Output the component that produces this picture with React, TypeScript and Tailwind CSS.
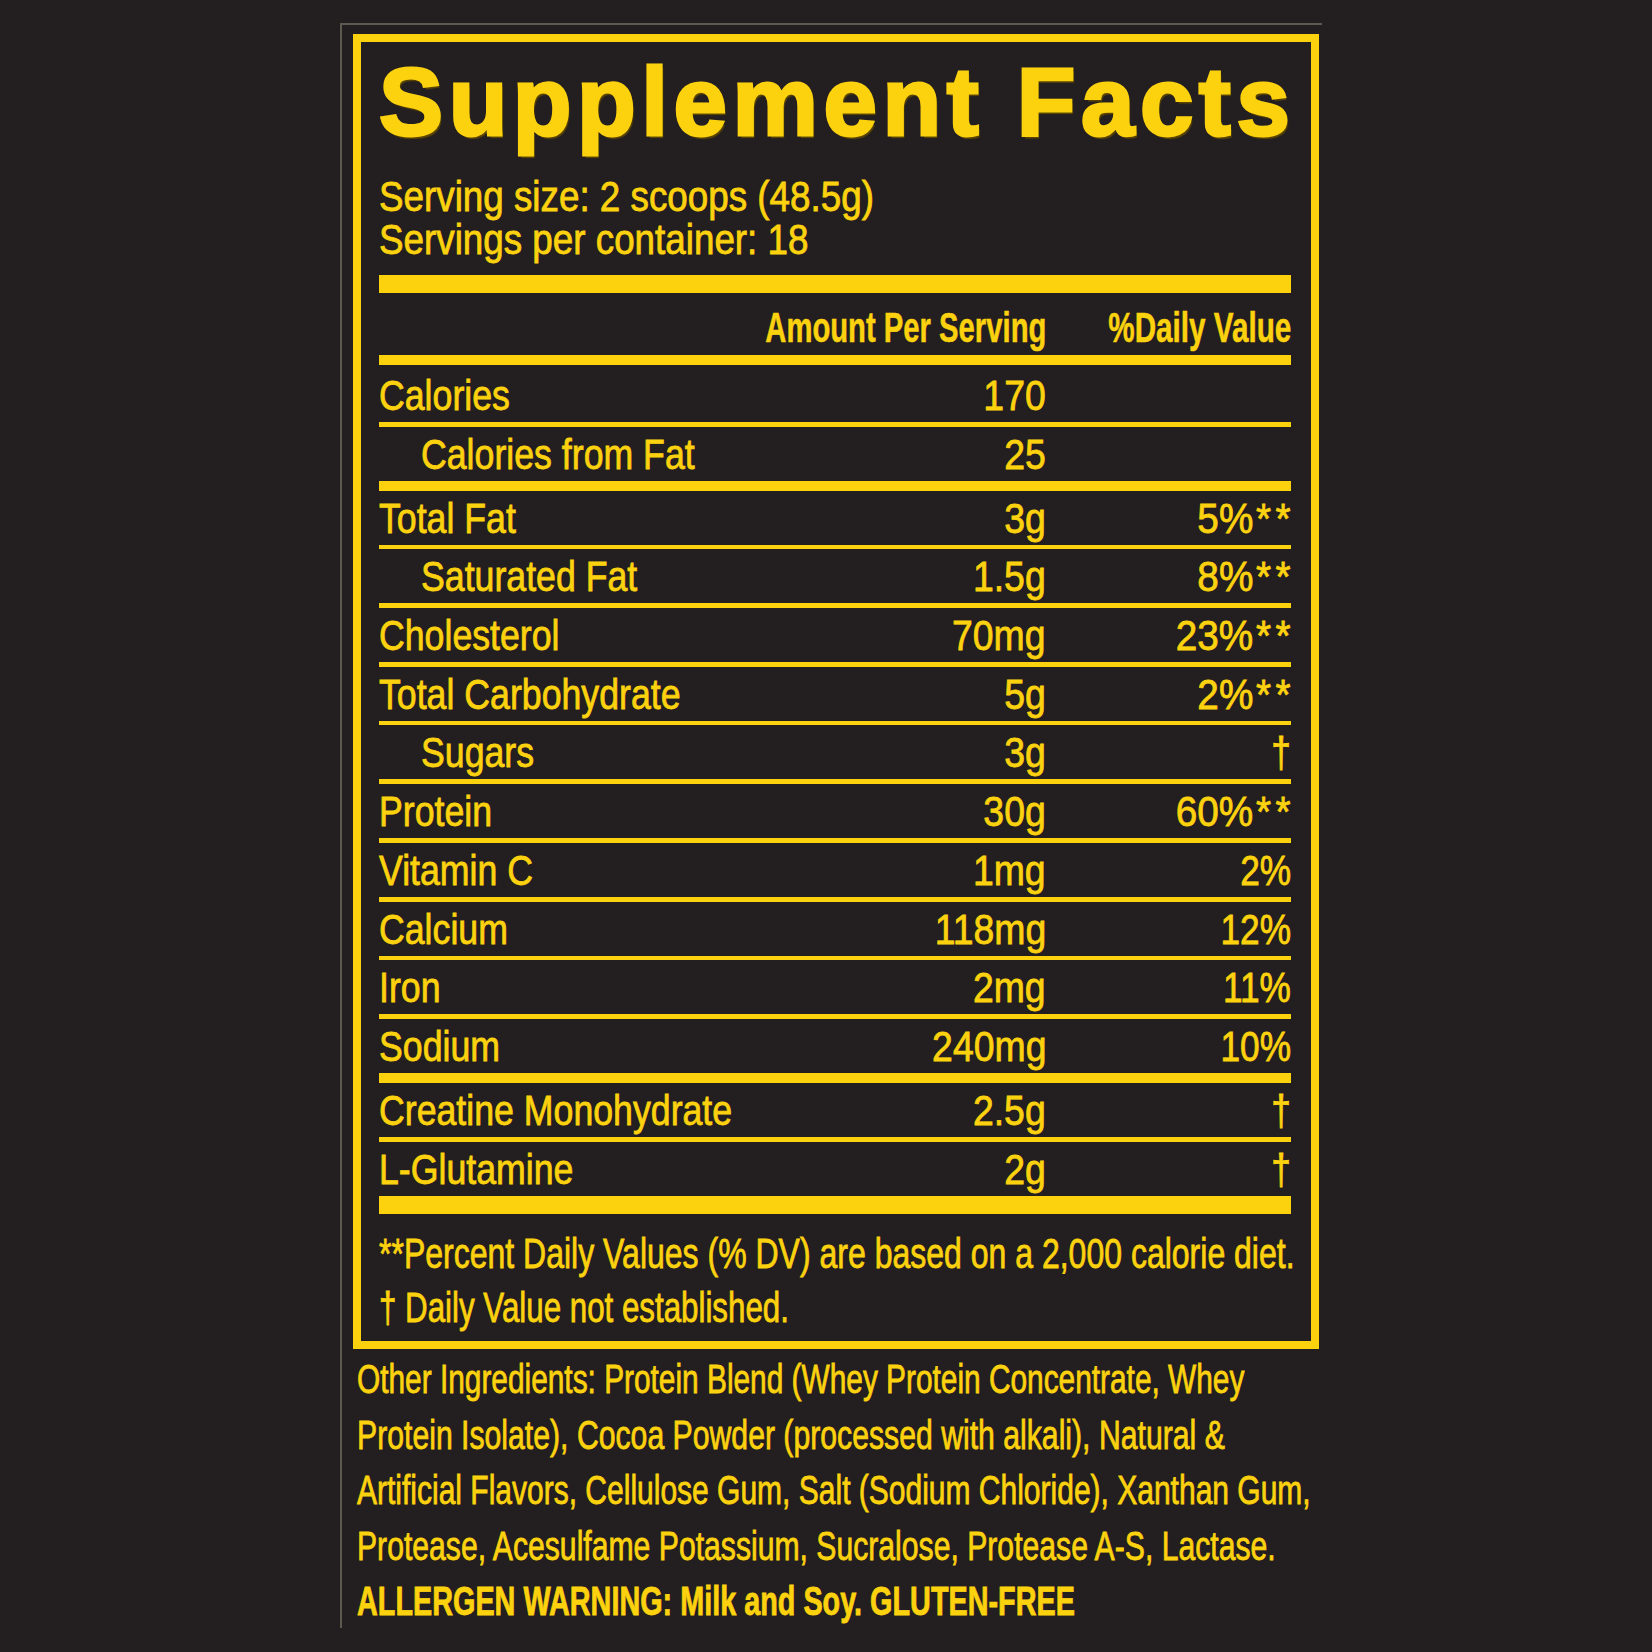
import React from "react";

const FONT = "[font-family:'Liberation_Sans',Arial,sans-serif]";
const BODY = "[-webkit-text-stroke:0.8px_#fcd20f]";

type Row = {
  name: string;
  amt: string;
  dv: string;
  indent?: boolean;
  after?: "thin" | "medium" | "thick";
};

const ROWS: Row[] = [
  { name: "Calories", amt: "170", dv: "" },
  { name: "Calories from Fat", amt: "25", dv: "", indent: true, after: "medium" },
  { name: "Total Fat", amt: "3g", dv: "5%**" },
  { name: "Saturated Fat", amt: "1.5g", dv: "8%**", indent: true },
  { name: "Cholesterol", amt: "70mg", dv: "23%**" },
  { name: "Total Carbohydrate", amt: "5g", dv: "2%**" },
  { name: "Sugars", amt: "3g", dv: "†", indent: true },
  { name: "Protein", amt: "30g", dv: "60%**" },
  { name: "Vitamin C", amt: "1mg", dv: "2%" },
  { name: "Calcium", amt: "118mg", dv: "12%" },
  { name: "Iron", amt: "2mg", dv: "11%" },
  { name: "Sodium", amt: "240mg", dv: "10%", after: "medium" },
  { name: "Creatine Monohydrate", amt: "2.5g", dv: "†" },
  { name: "L-Glutamine", amt: "2g", dv: "†", after: "thick" },
];

const INGREDIENTS = [
  { text: "Other Ingredients: Protein Blend (Whey Protein Concentrate, Whey", cls: "origin-left scale-x-[0.746]" },
  { text: "Protein Isolate), Cocoa Powder (processed with alkali), Natural &", cls: "origin-left scale-x-[0.755]" },
  { text: "Artificial Flavors, Cellulose Gum, Salt (Sodium Chloride), Xanthan Gum,", cls: "origin-left scale-x-[0.75]" },
  { text: "Protease, Acesulfame Potassium, Sucralose, Protease A-S, Lactase.", cls: "origin-left scale-x-[0.754]" },
];

// the label face is a narrow grotesque, so Liberation Sans is squeezed sideways
function Cond({ children, cls }: { children: React.ReactNode; cls: string }) {
  return <span className={`inline-block shrink-0 whitespace-nowrap ${cls}`}>{children}</span>;
}

function Rule({ kind }: { kind: "thin" | "medium" | "thick" }) {
  if (kind === "thick") return <div className="h-[18px] bg-[#fcd20f]" />;
  if (kind === "medium") return <div className="h-[10px] bg-[#fcd20f]" />;
  return <div className="h-[4.7px] bg-[#fcd20f]" />;
}

function Daily({ value }: { value: string }) {
  if (value.endsWith("**")) {
    return (
      <Cond cls="origin-right scale-x-[0.9]">
        {value.slice(0, -2)}
        <span className="ml-[3px] tracking-[5px] -mr-[5px]">**</span>
      </Cond>
    );
  }
  return <Cond cls="origin-right scale-x-[0.82]">{value}</Cond>;
}

export default function App() {
  return (
    <div className={`min-h-[1652px] w-[1652px] overflow-hidden bg-[#231f20] text-[#fcd20f] ${FONT}`}>
      <div className="h-[23px]" />
      <div className="ml-[340px] h-[1605px] w-[982px] border-l-2 border-t-2 border-[#5f584e] pl-[11px] pt-[9px]">
        {/* Facts panel */}
        <div className="box-border h-[1315px] w-[966px] border-[8px] border-[#fcd20f] pl-[18px] pr-[20px] pt-[12px]">
          <h1 className="whitespace-nowrap text-[96px] font-bold leading-[96px] tracking-[5.6px] [-webkit-text-stroke:3px_#fcd20f] [text-shadow:2px_3px_1px_#5c4600]">
            Supplement Facts
          </h1>

          <div className={`mt-[25px] text-[42px] leading-[43px] ${BODY}`}>
            <div>
              <Cond cls="origin-left scale-x-[0.876]">Serving size: 2 scoops (48.5g)</Cond>
            </div>
            <div>
              <Cond cls="origin-left scale-x-[0.876]">Servings per container: 18</Cond>
            </div>
          </div>

          <div className="mt-[14px]">
            <Rule kind="thick" />
          </div>

          <div className="flex h-[62px] items-start pt-[13px] text-[43px] font-bold leading-[43px] [-webkit-text-stroke:0.5px_#fcd20f]">
            <div className="flex-1" />
            <div className="flex w-[440px] justify-end">
              <Cond cls="origin-right scale-x-[0.68]">Amount Per Serving</Cond>
            </div>
            <div className="flex w-[245px] justify-end">
              <Cond cls="origin-right scale-x-[0.69]">%Daily Value</Cond>
            </div>
          </div>
          <Rule kind="medium" />

          {ROWS.map((r, i) => (
            <div key={r.name}>
              <div
                className={`flex ${i === 0 ? "h-[57px] pt-[3px]" : "h-[54px]"} items-center text-[43px] leading-[54px] ${BODY}`}
              >
                <div className={`flex-1 ${r.indent ? "pl-[42px]" : ""}`}>
                  <Cond cls="origin-left scale-x-[0.83]">{r.name}</Cond>
                </div>
                <div className="flex w-[200px] justify-end">
                  <Cond cls="origin-right scale-x-[0.87]">{r.amt}</Cond>
                </div>
                <div className="flex w-[245px] justify-end">
                  <Daily value={r.dv} />
                </div>
              </div>
              <Rule kind={r.after ?? "thin"} />
            </div>
          ))}

          <div className={`mt-[13px] text-[42px] leading-[54px] ${BODY}`}>
            <div>
              <Cond cls="origin-left scale-x-[0.762]">
                **Percent Daily Values (% DV) are based on a 2,000 calorie diet.
              </Cond>
            </div>
            <div>
              <Cond cls="origin-left scale-x-[0.745]">† Daily Value not established.</Cond>
            </div>
          </div>
        </div>

        {/* Ingredients */}
        <div className={`ml-[4px] mt-[3px] text-[40px] leading-[55.5px] ${BODY}`}>
          {INGREDIENTS.map((line) => (
            <div key={line.text}>
              <Cond cls={line.cls}>{line.text}</Cond>
            </div>
          ))}
          <div className="font-bold">
            <Cond cls="origin-left scale-x-[0.72]">ALLERGEN WARNING: Milk and Soy. GLUTEN-FREE</Cond>
          </div>
        </div>
      </div>
    </div>
  );
}
